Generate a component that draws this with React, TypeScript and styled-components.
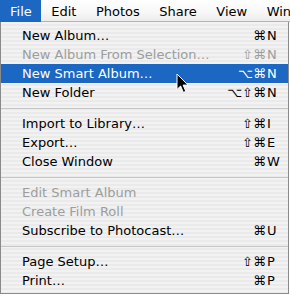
import React from "react";
import styled, { createGlobalStyle } from "styled-components";

interface MenuEntry {
  label?: string;
  mods?: string;
  keyName?: string;
  disabled?: boolean;
  highlighted?: boolean;
  separator?: boolean;
}

const titles = ["File", "Edit", "Photos", "Share", "View", "Window"];

const entries: MenuEntry[] = [
  { label: "New Album…", mods: "⌘", keyName: "N" },
  { label: "New Album From Selection…", mods: "⇧⌘", keyName: "N", disabled: true },
  { label: "New Smart Album…", mods: "⌥⌘", keyName: "N", highlighted: true },
  { label: "New Folder", mods: "⌥⇧⌘", keyName: "N" },
  { separator: true },
  { label: "Import to Library…", mods: "⇧⌘", keyName: "I" },
  { label: "Export…", mods: "⇧⌘", keyName: "E" },
  { label: "Close Window", mods: "⌘", keyName: "W" },
  { separator: true },
  { label: "Edit Smart Album", disabled: true },
  { label: "Create Film Roll", disabled: true },
  { label: "Subscribe to Photocast…", mods: "⌘", keyName: "U" },
  { separator: true },
  { label: "Page Setup…", mods: "⇧⌘", keyName: "P" },
  { label: "Print…", mods: "⌘", keyName: "P" },
];

const App: React.FC = () => {
  return (
    <Screen>
      <GlobalStyle />
      <MenuBar>
        {titles.map((t, i) => (
          <MenuTitle key={t} $active={i === 0}>
            {t}
          </MenuTitle>
        ))}
      </MenuBar>
      <Dropdown>
        {entries.map((e, i) =>
          e.separator ? (
            <Separator key={i} />
          ) : (
            <MenuItem key={i} $disabled={e.disabled} $highlighted={e.highlighted}>
              <span>{e.label}</span>
              {e.keyName && (
                <Shortcut>
                  <Mods>{e.mods}</Mods>
                  <KeyName>{e.keyName}</KeyName>
                </Shortcut>
              )}
            </MenuItem>
          )
        )}
      </Dropdown>
      <Cursor width="14" height="22" viewBox="0 0 14 22">
        <path
          d="M1 1 L1 16.5 L4.6 13 L7.4 19.4 L9.8 18.3 L7.1 12.1 L12 12.1 Z"
          fill="#000"
          stroke="#fff"
          strokeWidth="1"
          strokeLinejoin="round"
        />
      </Cursor>
    </Screen>
  );
};

const GlobalStyle = createGlobalStyle`
  body {
    margin: 0;
    background: #ffffff;
  }
`;

const Screen = styled.div`
  position: relative;
  width: 290px;
  height: 296px;
  overflow: hidden;
  font-family: "DejaVu Sans", "Liberation Sans", sans-serif;
  font-size: 13px;
  color: #000;
`;

const MenuBar = styled.div`
  display: flex;
  height: 21px;
  background: linear-gradient(#ffffff, #f7f7f7 60%, #ececec);
  border-bottom: 1px solid #b4b4b4;
  white-space: nowrap;
`;

const MenuTitle = styled.div<{ $active?: boolean }>`
  display: flex;
  align-items: center;
  padding: 0 9.5px 0 10px;
  height: 22px;
  color: ${(p) => (p.$active ? "#ffffff" : "#000000")};
  background: ${(p) => (p.$active ? "#1b67c2" : "transparent")};
`;

const Dropdown = styled.div`
  width: 287px;
  padding: 4px 0 3px;
  border: 1px solid #8a8a8a;
  border-top: none;
  background: repeating-linear-gradient(
    #f2f2f2 0px,
    #f2f2f2 2px,
    #eaeaea 2px,
    #eaeaea 4px
  );
`;

const MenuItem = styled.div<{ $disabled?: boolean; $highlighted?: boolean }>`
  display: flex;
  align-items: center;
  justify-content: space-between;
  height: 19px;
  padding: 0 9px 0 21px;
  white-space: nowrap;
  color: ${(p) =>
    p.$highlighted ? "#ffffff" : p.$disabled ? "#9d9d9d" : "#000000"};
  background: ${(p) => (p.$highlighted ? "#1b67c2" : "transparent")};
`;

const Shortcut = styled.span`
  display: flex;
`;

const Mods = styled.span`
  text-align: right;
`;

const KeyName = styled.span`
  width: 12px;
  padding-left: 1px;
`;

const Separator = styled.div`
  height: 12px;
  display: flex;
  align-items: center;
  &::after {
    content: "";
    flex: 1;
    height: 1px;
    background: #c6c6c6;
  }
`;

const Cursor = styled.svg`
  position: absolute;
  left: 176px;
  top: 73px;
`;

export default App;
